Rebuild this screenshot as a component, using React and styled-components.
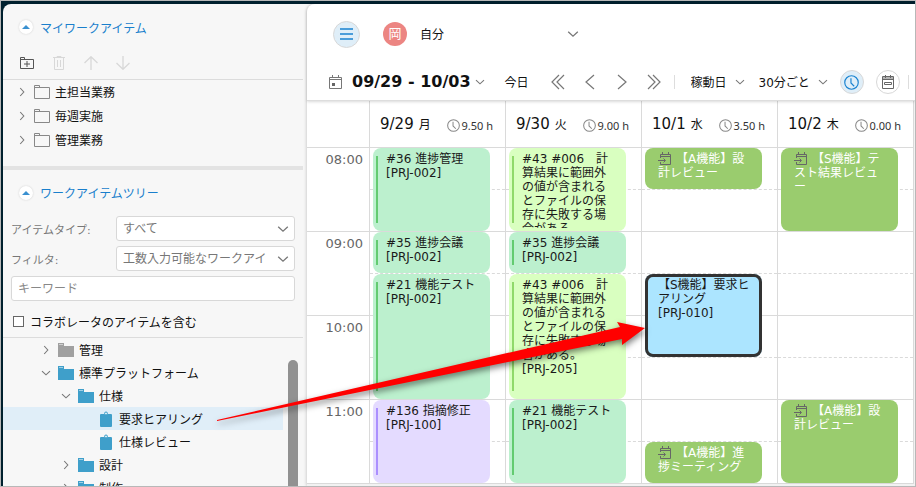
import React, { useState } from "react";
import styled, { createGlobalStyle } from "styled-components";

const FIRST_HOUR = 8;
const HOURS = ["08:00", "09:00", "10:00", "11:00"];

const EVENT_COLORS = {
  mint: { back: "#bcf0ce", bar: "#63cb70", text: "#1a1a1a" },
  lime: { back: "#d9ffc0", bar: "#90d96a", text: "#1a1a1a" },
  purple: { back: "#e4dbff", bar: "#ab8fff", text: "#1a1a1a" },
  green: { back: "#9acc6e", bar: "", text: "#ffffff" },
  blue: { back: "#ace5ff", bar: "", text: "#1a1a1a" },
};

const LONG_TITLE =
  "#43 #006　計算結果に範囲外の値が含まれるとファイルの保存に失敗する場合がある。";

const DAYS = [
  {
    date: "9/29",
    weekday: "月",
    total: "9.50 h",
    events: [
      { start: 8, end: 9, color: "mint", title: "#36 進捗管理\n[PRJ-002]" },
      { start: 9, end: 9.5, color: "mint", title: "#35 進捗会議\n[PRJ-002]" },
      { start: 9.5, end: 11, color: "mint", title: "#21 機能テスト\n[PRJ-002]" },
      { start: 11, end: 12, color: "purple", title: "#136 指摘修正\n[PRJ-100]" },
    ],
  },
  {
    date: "9/30",
    weekday: "火",
    total: "9.00 h",
    events: [
      { start: 8, end: 9, color: "lime", title: LONG_TITLE },
      { start: 9, end: 9.5, color: "mint", title: "#35 進捗会議\n[PRJ-002]" },
      { start: 9.5, end: 11, color: "lime", title: LONG_TITLE + "\n[PRJ-205]" },
      { start: 11, end: 12, color: "mint", title: "#21 機能テスト\n[PRJ-002]" },
    ],
  },
  {
    date: "10/1",
    weekday: "水",
    total: "3.50 h",
    events: [
      { start: 8, end: 8.5, color: "green", imported: true, title: "【A機能】設計レビュー" },
      {
        start: 9.5,
        end: 10.5,
        color: "blue",
        selected: true,
        title: "【S機能】要求ヒアリング\n[PRJ-010]",
      },
      { start: 11.5, end: 12, color: "green", imported: true, title: "【A機能】進捗ミーティング" },
    ],
  },
  {
    date: "10/2",
    weekday: "木",
    total: "0.00 h",
    events: [
      { start: 8, end: 9, color: "green", imported: true, title: "【S機能】テスト結果レビュー" },
      { start: 11, end: 12, color: "green", imported: true, title: "【A機能】設計レビュー" },
    ],
  },
];

const MY_ITEMS = ["主担当業務", "毎週実施", "管理業務"];

const TREE = [
  { label: "管理", level: 0, icon: "folder", color: "#a0a0a0" },
  { label: "標準プラットフォーム", level: 0, icon: "folder", color: "#3f9fca", open: true },
  { label: "仕様", level: 1, icon: "folder", color: "#3f9fca", open: true },
  { label: "要求ヒアリング", level: 2, icon: "item", color: "#3f9fca", selected: true },
  { label: "仕様レビュー", level: 2, icon: "item", color: "#3f9fca" },
  { label: "設計", level: 1, icon: "folder", color: "#3f9fca" },
  { label: "制作", level: 1, icon: "folder", color: "#3f9fca" },
];

/* icons */

const Chevron = ({ dir = "down", size = 10, color = "#777" }) => {
  const paths = {
    down: "M1 3.2 L5 6.8 L9 3.2",
    right: "M3.2 1 L6.8 5 L3.2 9",
  };
  return (
    <svg width={size} height={size} viewBox="0 0 10 10" fill="none" stroke={color} strokeWidth="1.1">
      <path d={paths[dir]} />
    </svg>
  );
};

const PagerIcon = ({ back, double }) => (
  <svg width="16" height="16" viewBox="0 0 16 16" fill="none" stroke="#777" strokeWidth="1.2">
    <g transform={back ? undefined : "translate(16 0) scale(-1 1)"}>
      {double ? <path d="M9 1 L2 8 L9 15 M14 1 L7 8 L14 15" /> : <path d="M12 1 L4 8 L12 15" />}
    </g>
  </svg>
);

const FolderOutline = () => (
  <svg width="16" height="14" viewBox="0 0 16 14" fill="none" stroke="#888">
    <path d="M.5 13.5 V.5 H5.5 V2.5 H15.5 V13.5 Z M.5 2.5 H6" />
  </svg>
);

const FolderAdd = () => (
  <svg width="14" height="12" viewBox="0 0 14 12" fill="none" stroke="#555">
    <path d="M.5 11.5 V.5 H4.5 V2.5 H13.5 V11.5 Z M.5 2.5 H5 M7 4 V10 M4 7 H10" />
  </svg>
);

const TrashIcon = () => (
  <svg width="12" height="14" viewBox="0 0 12 14" fill="none" stroke="#d8d8d8">
    <path d="M0 1.5 H12 M4 1.5 V.5 H8 V1.5 M1.5 1.5 V13.5 H10.5 V1.5 M4.5 4 V11 M7.5 4 V11" />
  </svg>
);

const MoveIcon = ({ down }) => (
  <svg width="14" height="14" viewBox="0 0 14 14" fill="none" stroke="#d8d8d8" strokeWidth="1.3">
    <path d={down ? "M7 0 V13 M.5 7 L7 13.3 L13.5 7" : "M7 14 V1 M.5 7 L7 .7 L13.5 7"} />
  </svg>
);

const FolderSolid = ({ color }) => (
  <svg width="16" height="14" viewBox="0 0 16 14">
    <path d="M0 0 H6 V3 H16 V14 H0 Z" fill={color} />
    <path d="M1 1.5 H5" stroke="#fff" strokeOpacity=".5" />
  </svg>
);

const ItemSolid = ({ color }) => (
  <svg width="16" height="16" viewBox="0 0 16 16">
    <rect x="2" y="3" width="12" height="13" rx="1" fill={color} />
    <circle cx="8" cy="2.5" r="1.5" fill="#d5ebf5" stroke={color} />
  </svg>
);

const MenuIcon = () => (
  <svg width="13" height="12" viewBox="0 0 13 12" stroke="#1a83d0" strokeWidth="1.3">
    <path d="M0 1 H13 M0 6 H13 M0 11 H13" />
  </svg>
);

const ClockIcon = ({ size = 12, color = "#888" }) => (
  <svg width={size} height={size} viewBox="0 0 14 14" fill="none" stroke={color} strokeWidth="1.1">
    <circle cx="7" cy="7" r="6.3" />
    <path d="M6.5 3 V7.5 L9.5 10.5" />
  </svg>
);

const CalendarSmall = () => (
  <svg width="13" height="14" viewBox="0 0 13 14" fill="none" stroke="#777">
    <path d="M.5 2.5 H12.5 V13.5 H.5 Z M.5 4.5 H12.5 M3.5 0 V3 M9.5 0 V3" />
    <rect x="3" y="8" width="3" height="3" fill="#666" stroke="none" />
  </svg>
);

const CalendarRound = () => (
  <svg width="12" height="14" viewBox="0 0 12 14" fill="none" stroke="#666">
    <path d="M.5 1.5 H11.5 V13.5 H.5 Z M.5 4.5 H11.5 M3.5 0 V3 M8.5 0 V3 M2.5 7.5 H9.5 V9.5 H2.5 Z" />
    <path d="M1 3 H11" />
  </svg>
);

const ImportIcon = () => (
  <svg width="13" height="13" viewBox="0 0 13 13" fill="none" stroke="#666">
    <path d="M2.5 6 V2.5 H12.5 V12.5 H2.5 V10 M2.5 4.5 H12.5 M4.5 0 V3 M10.5 0 V3 M0 8.5 H7 M5.5 6.5 L7.5 8.5 L5.5 10.5" />
  </svg>
);

/* page */

const App = () => {
  const [selectedItem, setSelectedItem] = useState("要求ヒアリング");

  return (
    <>
      <GlobalStyle />
      <Frame>
        <Sidebar>
          <SectionTitle>
            <CollapseButton aria-label="折りたたむ">
              <Triangle />
            </CollapseButton>
            マイワークアイテム
          </SectionTitle>
          <ItemToolbar>
            <IconButton aria-label="フォルダを追加">
              <FolderAdd />
            </IconButton>
            <IconButton aria-label="削除" disabled>
              <TrashIcon />
            </IconButton>
            <IconButton aria-label="上へ" disabled>
              <MoveIcon />
            </IconButton>
            <IconButton aria-label="下へ" disabled>
              <MoveIcon down />
            </IconButton>
          </ItemToolbar>
          <MyItems>
            {MY_ITEMS.map((label) => (
              <MyItem key={label}>
                <Chevron dir="right" />
                <FolderOutline />
                <span>{label}</span>
              </MyItem>
            ))}
          </MyItems>
          <SectionTitle $second>
            <CollapseButton aria-label="折りたたむ">
              <Triangle />
            </CollapseButton>
            ワークアイテムツリー
          </SectionTitle>
          <Filters>
            <FilterRow>
              <FilterLabel htmlFor="item-type">アイテムタイプ:</FilterLabel>
              <SelectBox>
                <FilterSelect id="item-type">
                  <option>すべて</option>
                </FilterSelect>
                <Chevron size={12} />
              </SelectBox>
            </FilterRow>
            <FilterRow>
              <FilterLabel htmlFor="item-filter">フィルタ:</FilterLabel>
              <SelectBox>
                <FilterSelect id="item-filter">
                  <option>工数入力可能なワークアイ</option>
                </FilterSelect>
                <Chevron size={12} />
              </SelectBox>
            </FilterRow>
            <Keyword type="text" placeholder="キーワード" aria-label="キーワード" />
            <CheckLabel>
              <Checkbox type="checkbox" />
              コラボレータのアイテムを含む
            </CheckLabel>
          </Filters>
          <TreeArea>
            <Tree>
              {TREE.map((node) => (
                <TreeRow
                  key={node.label}
                  $level={node.level}
                  $selected={node.label === selectedItem}
                  onClick={() => setSelectedItem(node.label)}
                >
                  {node.icon === "folder" ? (
                    <>
                      <Chevron dir={node.open ? "down" : "right"} />
                      <FolderSolid color={node.color} />
                    </>
                  ) : (
                    <ItemSolid color={node.color} />
                  )}
                  <span>{node.label}</span>
                </TreeRow>
              ))}
            </Tree>
            <ScrollTrack>
              <ScrollThumb />
            </ScrollTrack>
          </TreeArea>
        </Sidebar>

        <Main>
          <MainHeader>
            <UserRow>
              <RoundButton $active $large aria-label="メニュー">
                <MenuIcon />
              </RoundButton>
              <Avatar>岡</Avatar>
              <UserSelectBox>
                <PlainSelect aria-label="ユーザー">
                  <option>自分</option>
                </PlainSelect>
                <Chevron size={12} />
              </UserSelectBox>
            </UserRow>
            <Toolbar>
              <RangeButton>
                <CalendarSmall />
                <b>09/29 - 10/03</b>
                <Chevron />
              </RangeButton>
              <TodayButton>今日</TodayButton>
              <Pager>
                <IconButton aria-label="前の週">
                  <PagerIcon back double />
                </IconButton>
                <IconButton aria-label="前へ">
                  <PagerIcon back />
                </IconButton>
                <IconButton aria-label="次へ">
                  <PagerIcon />
                </IconButton>
                <IconButton aria-label="次の週">
                  <PagerIcon double />
                </IconButton>
              </Pager>
              <Separator />
              <Options>
                <InlineSelect>
                  <PlainSelect aria-label="表示日">
                    <option>稼動日</option>
                  </PlainSelect>
                  <Chevron />
                </InlineSelect>
                <InlineSelect>
                  <PlainSelect aria-label="間隔">
                    <option>30分ごと</option>
                  </PlainSelect>
                  <Chevron />
                </InlineSelect>
              </Options>
              <ViewButtons>
                <RoundButton $active aria-label="時間">
                  <ClockIcon size={15} color="#1a83d0" />
                </RoundButton>
                <RoundButton aria-label="カレンダー">
                  <CalendarRound />
                </RoundButton>
              </ViewButtons>
              <Separator />
            </Toolbar>
          </MainHeader>

          <Week>
            <TimeColumn>
              <DayHeader />
              {HOURS.map((hour) => (
                <HourCell key={hour}>{hour}</HourCell>
              ))}
            </TimeColumn>
            {DAYS.map((day) => (
              <DayColumn key={day.date}>
                <DayHeader>
                  <DayDate>{day.date}</DayDate>
                  <Weekday>{day.weekday}</Weekday>
                  <DayTotal>
                    <ClockIcon size={13} />
                    {day.total}
                  </DayTotal>
                </DayHeader>
                <Slots>
                  {HOURS.flatMap((hour, i) => [
                    <Slot key={hour} $row={i * 2 + 1} />,
                    <Slot key={hour + "half"} $row={i * 2 + 2} $half />,
                  ])}
                  {day.events.map((event) => (
                    <Event
                      key={event.start}
                      $from={(event.start - FIRST_HOUR) * 2 + 1}
                      $to={(event.end - FIRST_HOUR) * 2 + 1}
                      $colors={EVENT_COLORS[event.color]}
                      $selected={event.selected}
                    >
                      <EventBar $color={EVENT_COLORS[event.color].bar} />
                      <EventText>
                        {event.imported && <ImportIcon />}
                        {event.title}
                      </EventText>
                    </Event>
                  ))}
                </Slots>
              </DayColumn>
            ))}
          </Week>
        </Main>

        <DragArrow width="460" height="130" viewBox="205 310 460 130">
          <polygon
            points="217,420 620,327 617,322 645,328 622,345 622,339 217,421"
            fill="#ff0000"
          />
        </DragArrow>
      </Frame>
    </>
  );
};

const GlobalStyle = createGlobalStyle`
  * {
    box-sizing: border-box;
  }

  body {
    margin: 0;
    font-family: "DejaVu Sans", "Noto Sans CJK JP", sans-serif;
    font-size: 12px;
    color: #111;
  }

  button, input, select {
    font: inherit;
    color: inherit;
    margin: 0;
    padding: 0;
    border: none;
    background: none;
  }

  ul {
    margin: 0;
    padding: 0;
    list-style: none;
  }

  svg {
    flex: none;
  }
`;

const Frame = styled.div`
  position: relative;
  display: flex;
  height: 100vh;
  overflow: hidden;
  padding: 3px 0 0 2px;
  border: 1px solid #b8b8b8;
  background: #00202e;
`;

/* runs 8px under the rounded corner of the main pane */
const Sidebar = styled.aside`
  display: flex;
  flex-direction: column;
  flex: none;
  width: 312px;
  margin-right: -8px;
  padding-right: 12px;
  background: #f7f7f7;
  border-top-left-radius: 8px;
`;

const SectionTitle = styled.h2`
  display: flex;
  align-items: center;
  gap: 7px;
  height: 46px;
  margin: 0;
  padding-left: 16px;
  font-size: 12px;
  font-weight: normal;
  color: #1a7fcc;
  ${(p) => p.$second && "border-top: 4px solid #e3e3e3; height: 49px;"}
`;

const CollapseButton = styled.button`
  display: flex;
  align-items: center;
  justify-content: center;
  width: 14px;
  height: 14px;
  border-radius: 50%;
  background: #fff;
  box-shadow: 0 0 2px #ccc;
`;

const Triangle = styled.span`
  border: 4px solid transparent;
  border-top: none;
  border-bottom: 4px solid #3a90d0;
`;

const ItemToolbar = styled.div`
  display: flex;
  align-items: center;
  gap: 16px;
  height: 30px;
  padding: 0 0 4px 16px;
  border-bottom: 1px solid #dcdcdc;
`;

const IconButton = styled.button`
  display: flex;
  align-items: center;
  justify-content: center;
  flex: none;
  width: 16px;
  height: 16px;
`;

const MyItems = styled.ul`
  height: 86px;
`;

const MyItem = styled.li`
  display: flex;
  align-items: center;
  height: 24px;
  padding-left: 14px;

  svg + svg {
    margin: 0 5px 0 7px;
  }

  span {
    padding-bottom: 2px;
  }
`;

const Filters = styled.div`
  display: flex;
  flex-direction: column;
  gap: 5px;
  padding: 1px 8px 0;
  border-bottom: 1px solid #dcdcdc;
`;

const FilterRow = styled.div`
  display: flex;
  align-items: center;
`;

const FilterLabel = styled.label`
  flex: none;
  width: 105px;
  font-size: 11px;
  color: #777;
`;

const SelectBox = styled.span`
  display: grid;
  grid-template-columns: 1fr 18px;
  align-items: center;
  flex: 1;
  min-width: 0;
  height: 25px;

  svg {
    grid-area: 1 / 2;
    pointer-events: none;
  }
`;

const FilterSelect = styled.select`
  grid-area: 1 / 1 / 2 / 3;
  width: 100%;
  height: 25px;
  padding: 0 27px 0 6px;
  appearance: none;
  border: 1px solid #d8d8d8;
  border-radius: 3px;
  background: #fff;
  color: #777;
`;

const Keyword = styled.input`
  height: 25px;
  padding: 0 6px;
  border: 1px solid #d8d8d8;
  border-radius: 3px;
  background: #fff;

  &::placeholder {
    color: #888;
  }
`;

const CheckLabel = styled.label`
  display: flex;
  align-items: center;
  gap: 6px;
  height: 31px;
  padding: 0 0 1px 2px;
`;

const Checkbox = styled.input`
  appearance: none;
  width: 11px;
  height: 11px;
  border: 1px solid #666;
  background: #fff;

  &:checked {
    background: #1a83d0;
  }
`;

const TreeArea = styled.div`
  display: flex;
  flex: 1;
  min-height: 0;
  overflow: hidden;
`;

const Tree = styled.ul`
  flex: 1;
`;

const TreeRow = styled.li`
  display: flex;
  align-items: center;
  gap: 5px;
  height: 23px;
  padding-left: ${(p) => 38 + p.$level * 20 + (p.$level === 2 ? 17 : 0)}px;
  background: ${(p) => (p.$selected ? "#e0eef8" : "transparent")};
  cursor: pointer;

  svg + svg {
    margin-left: 2px;
  }

  span {
    padding-bottom: 1px;
  }
`;

const ScrollTrack = styled.div`
  width: 20px;
  padding: 22px 5px 0;
`;

const ScrollThumb = styled.div`
  height: 100%;
  border-radius: 5px 5px 0 0;
  background: #919191;
`;

const Main = styled.main`
  position: relative;
  display: flex;
  flex-direction: column;
  flex: 1;
  min-width: 0;
  background: #f2f2f2;
  border-top-left-radius: 8px;
  box-shadow: -1px 0 3px rgba(0, 0, 0, 0.15);
`;

const MainHeader = styled.header`
  position: relative;
  background: #fff;
  border-top-left-radius: 8px;
  border-bottom: 1px solid #ddd;
  box-shadow: 0 1px 3px rgba(0, 0, 0, 0.15);
`;

const UserRow = styled.div`
  display: flex;
  align-items: center;
  height: 60px;
  padding-left: 26px;
`;

const RoundButton = styled.button`
  display: flex;
  align-items: center;
  justify-content: center;
  width: ${(p) => (p.$large ? 27 : 24)}px;
  height: ${(p) => (p.$large ? 27 : 24)}px;
  border: 1px solid #d8d8d8;
  border-radius: 50%;
  background: ${(p) => (p.$active ? "#dfeef8" : "#fff")};
`;

const Avatar = styled.span`
  width: 24px;
  height: 24px;
  margin: 0 13px 0 23px;
  border-radius: 50%;
  background: #ec8582;
  color: #fff;
  font-size: 13px;
  line-height: 24px;
  text-align: center;
`;

const UserSelectBox = styled.span`
  display: grid;
  grid-template-columns: 1fr 12px;
  align-items: center;
  width: 159px;

  svg {
    grid-area: 1 / 2;
    pointer-events: none;
  }
`;

const PlainSelect = styled.select`
  grid-area: 1 / 1 / 2 / 3;
  appearance: none;
  height: 24px;
  padding-top: 1px;
`;

const Toolbar = styled.div`
  display: flex;
  align-items: center;
  height: 36px;
  padding-left: 22px;
`;

const RangeButton = styled.button`
  display: flex;
  align-items: center;
  white-space: nowrap;

  b {
    margin: 0 4px 0 10px;
    padding-bottom: 1px;
    font-size: 16px;
    line-height: 20px;
  }
`;

const TodayButton = styled.button`
  margin: 0 21px 0 20px;
  padding-bottom: 2px;
  white-space: nowrap;
`;

const Pager = styled.div`
  display: flex;
  gap: 16px;
  margin-right: 12px;
`;

const Separator = styled.span`
  flex: none;
  width: 1px;
  height: 14px;
  background: #ddd;
`;

const Options = styled.div`
  display: flex;
  gap: 14px;
  margin: 0 12px 0 16px;
`;

const InlineSelect = styled.span`
  display: flex;
  align-items: center;
  gap: 7px;
`;

const ViewButtons = styled.div`
  display: flex;
  gap: 12px;
  margin-right: 8px;
`;

const Week = styled.section`
  display: grid;
  grid-template-columns: 62px repeat(4, 1fr);
  margin-right: 1px;
  border-right: 1px solid #dadada;
  border-bottom: 1px solid #dadada;
  background: #fff;
`;

const TimeColumn = styled.div`
  display: flex;
  flex-direction: column;
`;

const DayColumn = styled.div`
  min-width: 0;
  border-left: 1px solid #dadada;
`;

const DayHeader = styled.div`
  display: flex;
  align-items: center;
  height: 46px;
  padding: 0 12px 0 10px;
`;

const DayDate = styled.span`
  font-size: 15px;
`;

const Weekday = styled.span`
  margin-left: 5px;
  padding-top: 2px;
  font-size: 12px;
  line-height: 14px;
`;

const DayTotal = styled.span`
  display: flex;
  align-items: center;
  gap: 2px;
  margin-left: auto;
  padding-top: 3px;
  font-family: "Noto Sans", sans-serif;
  font-size: 11px;
  line-height: 14px;
  color: #333;
`;

const HourCell = styled.div`
  height: 84px;
  padding: 4px 6px 0 0;
  border-top: 1px solid #dadada;
  font-size: 13px;
  text-align: right;
  color: #666;
`;

const Slots = styled.div`
  display: grid;
  grid-template-columns: 1fr;
  grid-template-rows: repeat(8, 42px);
`;

const Slot = styled.div`
  grid-column: 1;
  grid-row: ${(p) => p.$row};
  border-top: 1px ${(p) => (p.$half ? "dashed" : "solid")} #dadada;
`;

const Event = styled.article`
  display: flex;
  grid-column: 1;
  grid-row: ${(p) => p.$from} / ${(p) => p.$to};
  min-width: 0;
  min-height: 0;
  margin: 1px 15px 0 3px;
  overflow: hidden;
  border-radius: 8px;
  background: ${(p) => p.$colors.back};
  color: ${(p) => p.$colors.text};
  ${(p) => p.$selected && "box-shadow: inset 0 0 0 3px #333;"}
`;

const EventBar = styled.span`
  flex: none;
  width: 2px;
  margin: 8px 8px 8px 3px;
  background: ${(p) => p.$color || "transparent"};
`;

const EventText = styled.p`
  flex: 1;
  margin: 4px 10px 3px 0;
  overflow: hidden;
  line-height: 14px;
  white-space: pre-line;
  word-break: break-all;
  line-break: anywhere;

  svg {
    margin-right: 5px;
    vertical-align: -2px;
  }
`;

/* lies over the sidebar and the calendar */
const DragArrow = styled.svg`
  position: absolute;
  top: 309px;
  left: 204px;
  pointer-events: none;
  filter: drop-shadow(1px 3px 3px rgba(0, 0, 0, 0.5));
`;

export default App;
